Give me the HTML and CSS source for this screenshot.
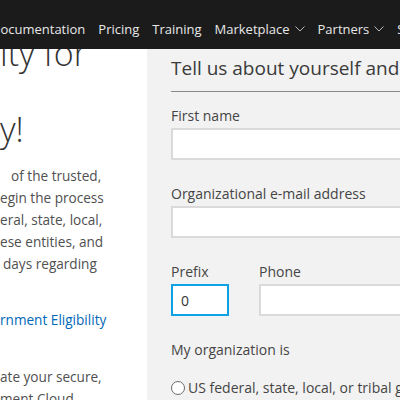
FILE: index.html
```html
<!DOCTYPE html>
<html lang="en">
<head>
    <meta charset="UTF-8">
    <title>Azure Government trial</title>
    <link rel="stylesheet" href="styles.css">
</head>
<body>
    <header class="topnav">
        <nav class="nav-links">
            <a href="#">Documentation</a>
            <a href="#">Pricing</a>
            <a href="#">Training</a>
            <a href="#" class="has-menu">Marketplace
                <svg class="chev" width="10" height="6" viewBox="0 0 10 6"><polyline points="0.5,0.5 5,5 9.5,0.5" /></svg>
            </a>
            <a href="#" class="has-menu">Partners
                <svg class="chev" width="10" height="6" viewBox="0 0 10 6"><polyline points="0.5,0.5 5,5 9.5,0.5" /></svg>
            </a>
            <a href="#">Support</a>
        </nav>
    </header>

    <main class="page">
        <section class="intro">
            <h1 class="intro-title">ity for<br><br>y!</h1>
            <p class="intro-text">
                <span class="line indent">of the trusted,</span>
                <span class="line">egin the process</span>
                <span class="line">eral, state, local,</span>
                <span class="line">ese entities, and</span>
                <span class="line nudge">days regarding</span>
            </p>
            <p class="intro-link"><a href="#">rnment Eligibility</a></p>
            <p class="intro-text">
                <span class="line">ate your secure,</span>
                <span class="line">ment Cloud</span>
            </p>
        </section>

        <section class="signup">
            <h2 class="signup-title">Tell us about yourself and your organization</h2>
            <form class="signup-form">
                <div class="field">
                    <label for="first">First name</label>
                    <input type="text" id="first" class="wide">
                </div>
                <div class="field">
                    <label for="email">Organizational e-mail address</label>
                    <input type="text" id="email" class="wide">
                </div>
                <div class="field-row">
                    <div class="field">
                        <label for="prefix">Prefix</label>
                        <input type="text" id="prefix" class="prefix" value="0">
                    </div>
                    <div class="field">
                        <label for="phone">Phone</label>
                        <input type="text" id="phone" class="phone">
                    </div>
                </div>
                <div class="org">
                    <div class="org-label">My organization is</div>
                    <label class="radio"><input type="radio" name="org"> US federal, state, local, or tribal government</label>
                </div>
            </form>
        </section>
    </main>
</body>
</html>
```

FILE: styles.css
```css
body { margin: 0; font-family: "Open Sans", "Noto Sans", sans-serif; background: #fff; color: #505050; overflow: hidden; }

.topnav { height: 49px; background: #1b1b1b; overflow: hidden; white-space: nowrap; position: relative; z-index: 2; }
.nav-links { display: flex; align-items: center; gap: 13px; height: 100%; padding-top: 9px; box-sizing: border-box; margin-left: -9px; }
.nav-links a { color: #e8e8e8; text-decoration: none; font-size: 13px; display: flex; align-items: center; gap: 5px; }
.chev { fill: none; stroke: #b8b8b8; stroke-width: 1; flex: none; }

.page { display: flex; height: 351px; }

.intro { width: 147px; flex: none; overflow: hidden; white-space: nowrap; }
.intro-title { font-size: 34px; font-weight: 300; line-height: 38px; color: #333; margin: -15px 0 0; }
.intro-text { font-size: 13.6px; line-height: 22px; margin: 17px 0 0; }
.intro-text .line { display: block; }
.intro-text .indent { padding-left: 11px; }
.intro-text .nudge { padding-left: 3px; }
.intro-link { font-size: 13.6px; line-height: 22px; margin: 34px 0 0; }
.intro-link a { color: #0067b8; text-decoration: none; }
.intro-link + .intro-text { margin-top: 35px; }

.signup { flex: 1; background: #f2f2f2; padding-left: 24px; overflow: hidden; white-space: nowrap; }
.signup-title { font-size: 19px; font-weight: 400; line-height: 28px; color: #3a3a3a; margin: 0; padding: 5px 0 9px; border-bottom: 1px solid #8a8a8a; }

.signup-form { display: flex; flex-direction: column; gap: 24px; padding-top: 14px; }
.field label, .org-label { display: block; font-size: 14px; line-height: 20px; color: #454545; margin-bottom: 2px; }
.field input { display: block; box-sizing: border-box; height: 32px; border: 2px solid #dadada; background: #fff; padding: 0 8px; font: 14px "Open Sans", sans-serif; color: #333; outline: none; }
.wide { width: 300px; }
.field-row { display: flex; gap: 30px; }
.field input.prefix { width: 58px; border-color: #0ea2e4; }
.phone { width: 200px; }

.org-label { margin-bottom: 18px; }
.radio { display: flex; align-items: center; gap: 3px; font-size: 14px; line-height: 20px; color: #454545; }
.radio input { appearance: none; flex: none; margin: 0; width: 14px; height: 14px; border: 1px solid #6a6a6a; border-radius: 50%; background: #fff; box-sizing: border-box; }
```
